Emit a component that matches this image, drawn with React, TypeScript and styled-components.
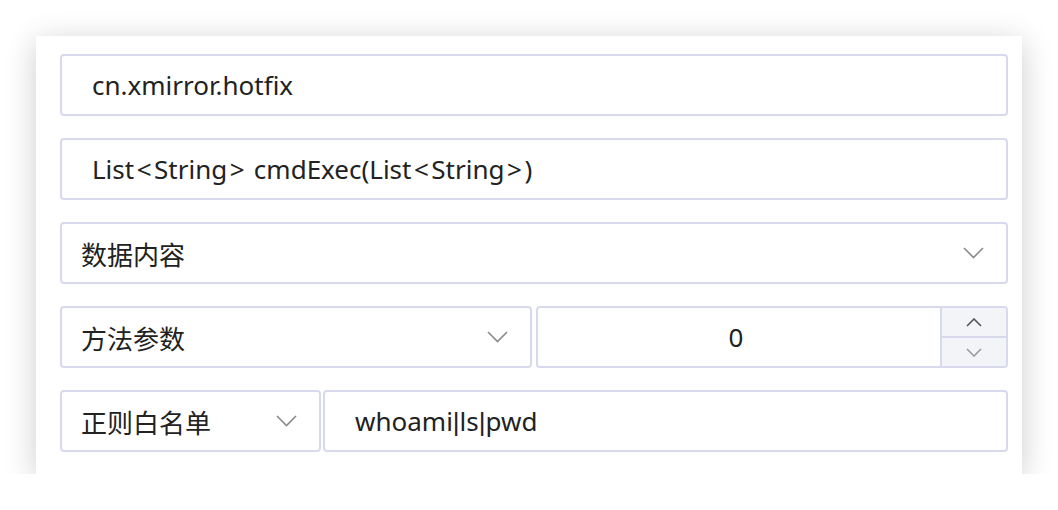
import React from "react";
import styled, { createGlobalStyle } from "styled-components";

const GlobalStyle = createGlobalStyle`
    html, body {
        margin: 0;
        padding: 0;
        background: #ffffff;
    }
    body {
        font-family: "Noto Sans", "Noto Sans CJK SC", sans-serif;
        color: #222222;
    }
`;

const Card = styled.div`
    box-sizing: border-box;
    width: 986px;
    margin: 36px 0 0 36px;
    padding: 18px 14px 22px 24px;
    background: #ffffff;
    box-shadow: 0 6px 30px rgba(0, 0, 0, 0.2);
    display: flex;
    flex-direction: column;
    gap: 22px;
`;

const Row = styled.div<{ $gap?: number }>`
    display: flex;
    gap: ${(p) => p.$gap ?? 0}px;
    height: 62px;
`;

const Field = styled.div<{ $width?: number }>`
    box-sizing: border-box;
    height: 62px;
    border: 2px solid #d8d9ec;
    border-radius: 4px;
    background: #ffffff;
    display: flex;
    align-items: center;
    font-size: 26px;
    ${(p) => (p.$width ? `width: ${p.$width}px; flex: none;` : "flex: 1;")}
`;

const InputText = styled.span<{ $center?: boolean }>`
    flex: 1;
    padding-left: ${(p) => (p.$center ? 0 : 30)}px;
    padding-right: ${(p) => (p.$center ? 6 : 0)}px;
    text-align: ${(p) => (p.$center ? "center" : "left")};
    white-space: nowrap;
`;

// angle brackets sit wider, the pipe narrower, than Noto draws them
const Angle = styled.span`
    margin: 0 2.5px;
`;

const Pipe = styled.span`
    font-family: "Liberation Sans", sans-serif;
`;

const SelectLabel = styled.span`
    flex: 1;
    padding-left: 19px;
    font-family: "Noto Sans CJK SC", sans-serif;
`;

const Arrow = styled.span`
    display: flex;
    align-items: center;
    padding-right: 22px;
`;

const Stepper = styled.div`
    width: 64px;
    align-self: stretch;
    display: flex;
    flex-direction: column;
    border-left: 2px solid #d8d9ec;
    background: #f2f4f8;
    border-radius: 0 2px 2px 0;
`;

const StepButton = styled.div<{ $top?: boolean }>`
    flex: 1;
    display: flex;
    align-items: center;
    justify-content: center;
    ${(p) => (p.$top ? "border-bottom: 2px solid #d8d9ec;" : "")}
`;

function Chevron({ up, w, color }: { up?: boolean; w: number; color: string }) {
    const h = w / 2;
    return (
        <svg width={w + 2} height={h + 2} viewBox={`-1 -1 ${w + 2} ${h + 2}`}>
            <polyline
                points={up ? `0,${h} ${w / 2},0 ${w},${h}` : `0,0 ${w / 2},${h} ${w},0`}
                fill="none"
                stroke={color}
                strokeWidth={1.6}
            />
        </svg>
    );
}

function Select({ label, width }: { label: string; width?: number }) {
    return (
        <Field $width={width}>
            <SelectLabel>{label}</SelectLabel>
            <Arrow>
                <Chevron w={19} color="#8a8a8a" />
            </Arrow>
        </Field>
    );
}

function Text({ value }: { value: string }) {
    return (
        <>
            {value.split(/([<>|])/).map((part, i) => {
                if (part === "|") return <Pipe key={i}>|</Pipe>;
                if (part === "<" || part === ">") return <Angle key={i}>{part}</Angle>;
                return part;
            })}
        </>
    );
}

export default function App() {
    return (
        <>
            <GlobalStyle />
            <Card>
                <Row>
                    <Field>
                        <InputText>cn.xmirror.hotfix</InputText>
                    </Field>
                </Row>
                <Row>
                    <Field>
                        <InputText>
                            <Text value="List<String> cmdExec(List<String>)" />
                        </InputText>
                    </Field>
                </Row>
                <Row>
                    <Select label="数据内容" />
                </Row>
                <Row $gap={4}>
                    <Select label="方法参数" />
                    <Field>
                        <InputText $center>0</InputText>
                        <Stepper>
                            <StepButton $top>
                                <Chevron up w={14} color="#555" />
                            </StepButton>
                            <StepButton>
                                <Chevron w={14} color="#999" />
                            </StepButton>
                        </Stepper>
                    </Field>
                </Row>
                <Row $gap={2}>
                    <Select label="正则白名单" width={261} />
                    <Field>
                        <InputText>
                            <Text value="whoami|ls|pwd" />
                        </InputText>
                    </Field>
                </Row>
            </Card>
        </>
    );
}
